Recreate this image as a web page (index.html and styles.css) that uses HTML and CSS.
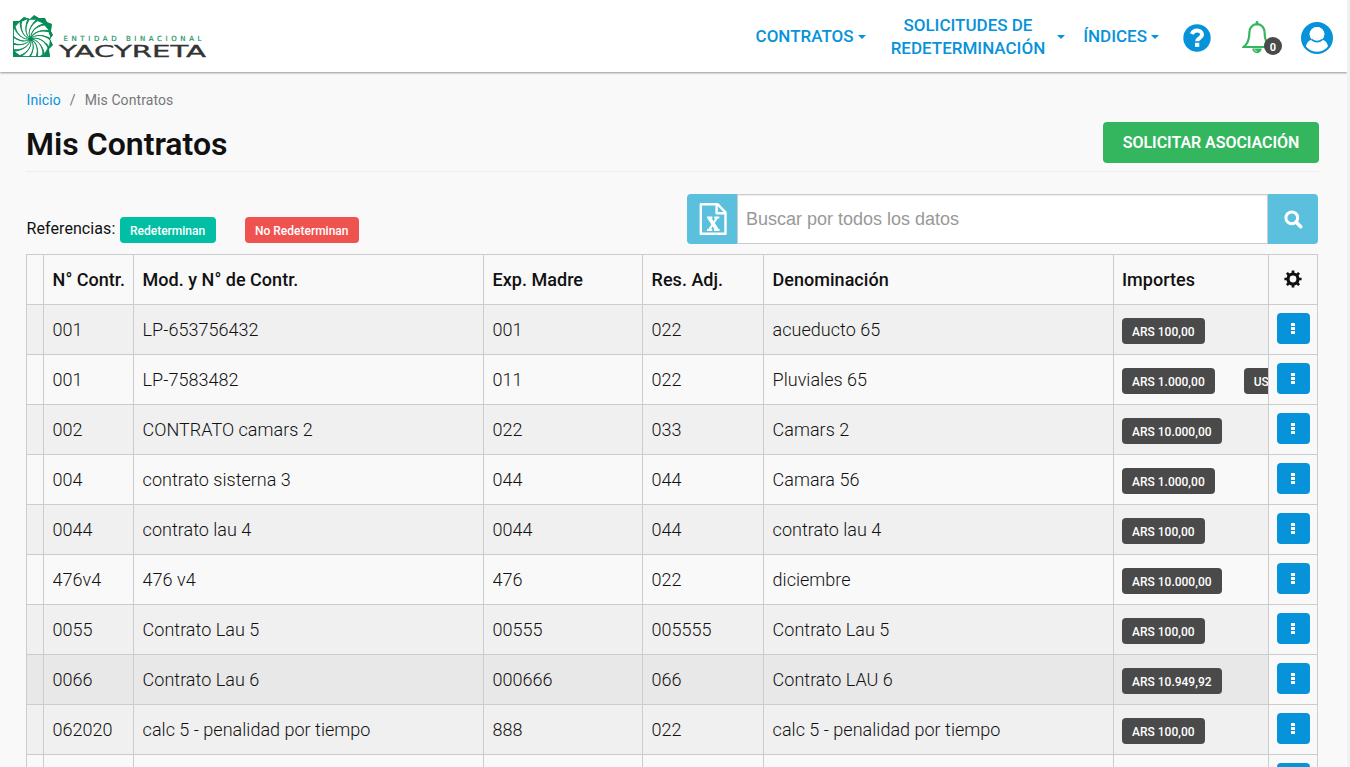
FILE: index.html
```html
<!DOCTYPE html>
<html lang="es">
<head>
<meta charset="utf-8">
<title>Mis Contratos</title>
<link rel="stylesheet" href="styles.css">
</head>
<body>
<div class="page">
  <header class="navbar">
    <svg class="logo" width="200" height="50" viewBox="0 0 200 50">
      <defs>
        <path id="blade" d="M17.5 24C17 17 23 11 31.5 10L36.5 15.5C28 14.5 21 17 17.5 24Z"/>
        <clipPath id="shape"><path d="M0 6H6L11 2L17 4L21 0L26 3L32 3L34 7L39 9L38 16L40 20L37 24L40 30L36 34L37 42H0Z"/></clipPath>
      </defs>
      <g clip-path="url(#shape)">
        <path class="logo-green" d="M0 6H6L11 2L17 4L21 0L26 3L32 3L34 7L39 9L38 16L40 20L37 24L40 30L36 34L37 42H0Z"/>
        <g class="logo-blades">
          <use href="#blade"/><use href="#blade" transform="rotate(24 17.5 24)"/><use href="#blade" transform="rotate(48 17.5 24)"/><use href="#blade" transform="rotate(72 17.5 24)"/><use href="#blade" transform="rotate(96 17.5 24)"/><use href="#blade" transform="rotate(120 17.5 24)"/><use href="#blade" transform="rotate(144 17.5 24)"/><use href="#blade" transform="rotate(168 17.5 24)"/><use href="#blade" transform="rotate(192 17.5 24)"/><use href="#blade" transform="rotate(216 17.5 24)"/><use href="#blade" transform="rotate(240 17.5 24)"/><use href="#blade" transform="rotate(264 17.5 24)"/><use href="#blade" transform="rotate(288 17.5 24)"/><use href="#blade" transform="rotate(312 17.5 24)"/><use href="#blade" transform="rotate(336 17.5 24)"/>
        </g>
        <circle class="logo-green" cx="17.5" cy="24" r="2"/>
        <path class="logo-edge" d="M.4 6.4H6L11 2L17 4L21 .5L26 3L32 3L34 7L39 9L38 16L39.6 20L37 24L39.6 30L36 34L36.6 41.6H.4Z"/>
      </g>
      <text class="logo-small" x="50.5" y="26" textLength="138">ENTIDAD BINACIONAL</text>
      <text class="logo-big" x="46" y="42" textLength="147" lengthAdjust="spacingAndGlyphs">YACYRETA</text>
    </svg>
    <nav class="menu">
      <a class="menu-item contratos"><span>CONTRATOS</span><i class="caret"></i></a>
      <a class="menu-item solicitudes"><span>SOLICITUDES DE<br>REDETERMINACIÓN</span><i class="caret"></i></a>
      <a class="menu-item indices"><span>ÍNDICES</span><i class="caret"></i></a>
      <svg class="help" width="28" height="28" viewBox="0 0 28 28"><circle cx="14" cy="14" r="13.7" fill="#0793da"/><path d="M8.8 10C10 7.2 12 6.6 14.2 6.6C17 6.6 19 8.4 19 10.8C19 14.2 14.2 14 14.2 17.2" fill="none" stroke="#fff" stroke-width="4"/><rect x="12" y="18.8" width="4.3" height="4" fill="#fff"/></svg>
      <span class="bell">
        <svg width="30" height="33" viewBox="0 0 30 33"><path d="M15 3.2C10.2 3.2 7.4 7 7.4 11.5C7.4 18.5 5.5 23 1.6 26H28.4C24.5 23 22.6 18.5 22.6 11.5C22.6 7 19.8 3.2 15 3.2Z" fill="none" stroke="#34b65f" stroke-width="2.2"/><path d="M15 1.4V3" stroke="#34b65f" stroke-width="2.8" stroke-linecap="round"/><path d="M10.3 27.5H19.7A4.7 4.7 0 0 1 10.3 27.5Z" fill="#34b65f"/><path d="M12.4 28.4A2.8 2.8 0 0 0 15 30.4" fill="none" stroke="#fff" stroke-width=".7"/></svg>
        <b class="count">0</b>
      </span>
      <svg class="user" width="32" height="32" viewBox="0 0 32 32"><circle cx="16" cy="16" r="14.9" fill="#fff" stroke="#0793da" stroke-width="2.2"/><path d="M16 1A15 15 0 0 0 4.6 25.8C5.6 20.7 7.5 18.4 11 17.8A7.4 7.4 0 1 1 21 17.8C24.5 18.4 26.4 20.7 27.4 25.8A15 15 0 0 0 16 1Z" fill="#0793da"/><circle cx="16" cy="12.3" r="7.2" fill="#fff"/><path d="M10.4 17.4Q16 22 21.6 17.4" fill="none" stroke="#0793da" stroke-width="1.6"/></svg>
    </nav>
  </header>
  <main class="content">
    <div class="breadcrumb"><a>Inicio</a><span class="sep">/</span><span>Mis Contratos</span></div>
    <div class="title-row"><h1>Mis Contratos</h1><button class="primary">SOLICITAR ASOCIACIÓN</button></div>
    <div class="tools">
      <div class="legend"><span class="legend-name">Referencias:</span><span class="tag teal">Redeterminan</span><span class="tag red">No Redeterminan</span></div>
      <div class="search">
        <span class="addon left"><svg width="28" height="33" viewBox="0 0 28 33"><path d="M1.8 1.2H18.5L26.5 9.3V30.8H1.8ZM17.6 1.2V10.2H26.5" fill="none" stroke="#fff" stroke-width="2.4" stroke-linejoin="round"/><path d="M8 14.6H13.4M15.2 14.6H20.3M8 26.9H13.2M15 26.9H20.5" stroke="#fff" stroke-width="2"/><path d="M10.3 15L18 26.7" stroke="#fff" stroke-width="3.6"/><path d="M17.8 15L10.3 26.7" stroke="#fff" stroke-width="2.2"/></svg></span>
        <input class="field" type="text" placeholder="Buscar por todos los datos">
        <span class="addon right"><svg width="19" height="19" viewBox="0 0 19 19"><circle cx="7.8" cy="7.8" r="5.9" fill="none" stroke="#fff" stroke-width="3"/><path d="M12 12L16.7 16.7" stroke="#fff" stroke-width="3.6" stroke-linecap="round"/></svg></span>
      </div>
    </div>
    <table class="grid">
      <colgroup><col class="c1"><col class="c2"><col class="c3"><col class="c4"><col class="c5"><col class="c6"><col class="c7"><col class="c8"></colgroup>
      <thead><tr><th></th><th>N° Contr.</th><th>Mod. y N° de Contr.</th><th>Exp. Madre</th><th>Res. Adj.</th><th>Denominación</th><th>Importes</th><th class="act"><svg width="18" height="18" viewBox="0 0 18 18"><circle cx="9" cy="9" r="5" fill="none" stroke="#111" stroke-width="3.2"/><path d="M9 .4V4M9 14V17.6M.4 9H4M14 9H17.6M2.9 2.9L5.2 5.2M12.8 12.8L15.1 15.1M15.1 2.9L12.8 5.2M5.2 12.8L2.9 15.1" stroke="#111" stroke-width="2.7"/></svg></th></tr></thead>
      <tbody id="rows"></tbody>
    </table>
  </main>
</div>
<script src="rows.js"></script>
</body>
</html>
```
FILE: styles.css
```css
* { box-sizing: border-box; }
body { margin: 0; height: 767px; overflow: hidden; background: #f1f1f1; font-family: Roboto, "Liberation Sans", sans-serif; color: #111; }
.page { width: 1347px; height: 767px; overflow: hidden; background: #f9f9f9; }
.navbar { display: flex; justify-content: space-between; height: 72px; padding: 15px 14px 0 13px; background: #fff; box-shadow: 0 1px 2px rgba(0,0,0,.4); }
.logo { display: block; }
.logo-green { fill: #078c56; }
.logo-blades { fill: #fff; stroke: #078c56; stroke-width: .9; }
.logo-edge { fill: none; stroke: #078c56; stroke-width: 1; }
.logo-small { font: 7px "DejaVu Sans", sans-serif; fill: #23965f; stroke: #23965f; stroke-width: .2; }
.logo-big { font: 15px "DejaVu Sans", sans-serif; fill: #333; stroke: #333; stroke-width: .3; }
.menu { display: flex; align-items: center; height: 45px; color: #0793da; font-size: 17px; line-height: 23px; font-weight: 500; }
.menu-item { display: flex; align-items: center; text-align: center; padding-bottom: 2px; }
.caret { border-top: 4px solid; border-left: 4px solid transparent; border-right: 4px solid transparent; }
.contratos { gap: 4px; margin-right: 25px; }
.solicitudes { gap: 12px; margin-right: 18px; }
.indices { gap: 4px; margin-right: 24px; }
.help { margin-right: 31px; }
.bell { position: relative; width: 40px; height: 33px; margin-right: 19px; }
.count { position: absolute; left: 22px; top: 16px; width: 18px; height: 18px; border-radius: 50%; background: #4a4a4a; color: #fff; font-size: 11px; line-height: 21px; text-align: center; }
.content { padding: 17px 28px 0 26px; }
.breadcrumb { display: flex; height: 23px; padding-left: .5px; font-size: 14px; line-height: 22px; color: #777; letter-spacing: .1px; }
.breadcrumb a { color: #0793da; }
.sep { margin: 0 9px; }
.title-row { display: flex; justify-content: space-between; height: 60px; padding-top: 10px; border-bottom: 1px solid #eee; }
h1 { margin: 0; font-size: 32px; line-height: 44px; font-weight: 600; }
.primary { width: 216px; height: 41px; border: 0; border-radius: 4px; background: #34b65f; color: #fff; font: 600 16px Roboto, sans-serif; letter-spacing: -.05px; }
.tools { display: flex; justify-content: space-between; height: 82px; padding: 22px 1px 0 0; }
.legend { display: flex; align-items: flex-start; padding-top: 23px; }
.legend-name { width: 94px; padding-left: .5px; font-size: 16px; line-height: 23px; letter-spacing: .08px; }
.tag { display: inline-block; height: 26px; padding: 0 10px; border-radius: 4px; color: #fff; font-size: 12px; line-height: 28px; font-weight: 500; background: #4a4a4a; }
.tag + .tag { margin-left: 29px; }
.teal { width: 96px; background: #00bfa5; }
.red { width: 114px; background: #ef5350; }
.search { display: flex; width: 631px; height: 50px; }
.addon { display: flex; align-items: center; justify-content: center; width: 50px; background: #5bc0de; }
.left { padding-left: 1px; border-radius: 4px 0 0 4px; }
.right { border-radius: 0 4px 4px 0; }
.field { width: 531px; border: 1px solid #ccc; padding: 1px 8px 0; background: #fff; box-shadow: inset 0 1px 1px rgba(0,0,0,.075); font: 18px "Liberation Sans", sans-serif; }
.field::placeholder { color: #999; }
.grid { width: 1292px; table-layout: fixed; border-collapse: separate; border-spacing: 0; border: solid #ccc; border-width: 1px 0 0 1px; font-size: 18px; }
.c1 { width: 17px; } .c2 { width: 90px; } .c3 { width: 350px; } .c4 { width: 159px; }
.c5 { width: 121px; } .c6 { width: 350px; } .c7 { width: 155px; } .c8 { width: 49px; }
.grid th, .grid td { height: 50px; padding: 0 0 0 8.6px; border: solid #ccc; border-width: 0 1px 1px 0; text-align: left; white-space: nowrap; overflow: hidden; }
.grid th:nth-child(n+7), .grid td:nth-child(n+7) { padding-left: 8px; }
.grid th { font-weight: 500; letter-spacing: .02px; }
.grid td { font-weight: 300; letter-spacing: .02px; }
.grid tbody tr:nth-child(odd) td { background: #f0f0f0; }
.grid tbody tr.hover td { background: #e8e8e8; }
.grid tbody tr td.act { background: #f9f9f9; }
.grid .act svg { display: block; margin: -1px 0 0 6.5px; }
.amounts { display: flex; padding-top: 3px; }
.amounts .tag { letter-spacing: 0; }
.dots { display: flex; flex-direction: column; align-items: center; justify-content: center; gap: 1px; width: 33px; height: 31px; margin-top: -2px; padding-right: 1px; border-radius: 4px; background: #0793da; }
.dots i { width: 4px; height: 3px; background: #fff; }
```
FILE: rows.js
```js
const rows = [
  ["001", "LP-653756432", "001", "022", "acueducto 65", ["ARS 100,00"]],
  ["001", "LP-7583482", "011", "022", "Pluviales 65", ["ARS 1.000,00", "USD"]],
  ["002", "CONTRATO camars 2", "022", "033", "Camars 2", ["ARS 10.000,00"]],
  ["004", "contrato sisterna 3", "044", "044", "Camara 56", ["ARS 1.000,00"]],
  ["0044", "contrato lau 4", "0044", "044", "contrato lau 4", ["ARS 100,00"]],
  ["476v4", "476 v4", "476", "022", "diciembre", ["ARS 10.000,00"]],
  ["0055", "Contrato Lau 5", "00555", "005555", "Contrato Lau 5", ["ARS 100,00"]],
  ["0066", "Contrato Lau 6", "000666", "066", "Contrato LAU 6", ["ARS 10.949,92"]],
  ["062020", "calc 5 - penalidad por tiempo", "888", "022", "calc 5 - penalidad por tiempo", ["ARS 100,00"]],
  ["", "", "", "", "", []]
];
const hovered = 7;
document.getElementById("rows").innerHTML = rows.map((r, i) =>
  `<tr class="${i === hovered ? "hover" : ""}"><td></td>` +
  r.slice(0, 5).map(t => `<td>${t}</td>`).join("") +
  `<td><div class="amounts">${r[5].map(a => `<span class="tag">${a}</span>`).join("")}</div></td>` +
  `<td class="act"><div class="dots"><i></i><i></i><i></i></div></td></tr>`).join("");
```
